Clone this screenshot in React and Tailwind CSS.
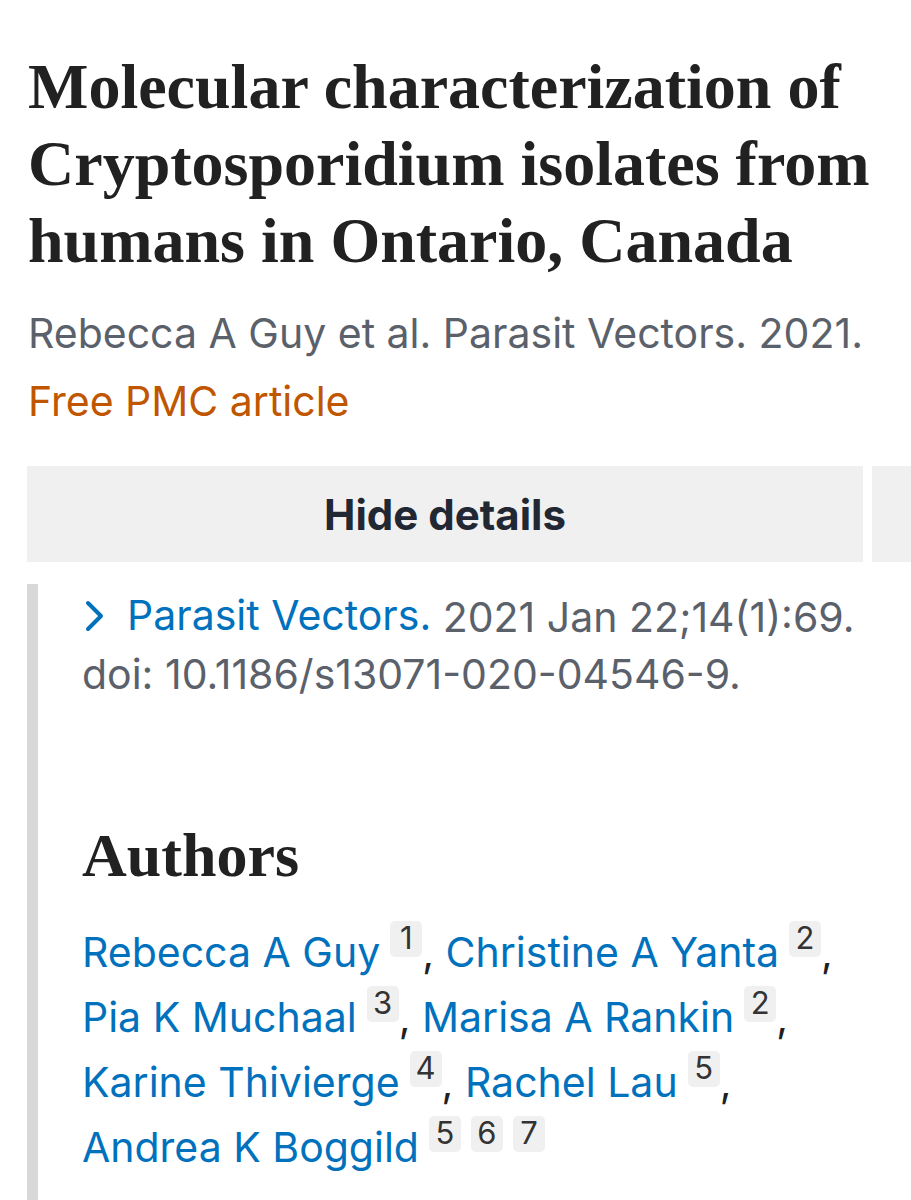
export default function App() {
  const sans = { fontFamily: 'Inter, "Liberation Sans", sans-serif' };
  const serif = { fontFamily: '"Liberation Serif", serif' };
  const Sup = ({ n }) => (
    <span className="inline-flex items-start justify-center align-top ml-[10px] mt-[1px] h-[36px] min-w-[32px] px-[6px] pt-[1px] rounded-[5px] bg-[#f0f0f0] text-[#333] text-[31px] leading-[32px]">
      {n}
    </span>
  );
  const Author = ({ name, sups, comma }) => (
    <span className="whitespace-nowrap">
      <span className="text-[#0071bc]">{name}</span>
      {sups.map((s, i) => (
        <Sup key={i} n={s} />
      ))}
      {comma && <span className="text-[#212121]">,</span>}
    </span>
  );
  return (
    <div className="bg-white w-[911px] h-[1200px] overflow-hidden" style={sans}>
      <div className="pl-[28px] pt-[48px]">
        <h1 className="text-[#212121] font-bold text-[64px] leading-[77px]" style={serif}>
          Molecular characterization of Cryptosporidium isolates from humans in Ontario, Canada
        </h1>
        <p className="mt-[31px] text-[#5b616b] text-[41px] leading-[46px]">
          Rebecca A Guy et al. Parasit Vectors. 2021.
        </p>
        <p className="mt-[22px] text-[#c05600] text-[41px] leading-[46px]">Free PMC article</p>
      </div>
      <div className="flex gap-[9px] pl-[27px] mt-[42px]">
        <div className="w-[836px] h-[96px] bg-[#f0f0f0] flex items-center justify-center text-[#212733] font-bold text-[42px]">
          Hide details
        </div>
        <div className="flex-1 h-[96px] bg-[#f0f0f0]" />
      </div>
      <div className="ml-[27px] mt-[22px] border-l-[11px] border-[#d8d8d8] pl-[44px] pt-[3px] h-[700px]">
        <p className="text-[#5b616b] text-[41px] leading-[57px] whitespace-nowrap">
          <span className="text-[#0071bc] inline-flex items-center">
            <svg width="20" height="32" viewBox="0 0 20 32" className="ml-[3px] mr-[22px]">
              <path d="M3 3 L16 16 L3 29" fill="none" stroke="#0071bc" strokeWidth="4" strokeLinecap="round" strokeLinejoin="round" />
            </svg>
            Parasit Vectors.
          </span>{' '}
          2021 Jan 22;14(1):69.
          <br />
          doi: 10.1186/s13071-020-04546-9.
        </p>
        <h2 className="mt-[120px] text-[#212121] font-bold text-[62px] leading-[64px]" style={serif}>
          Authors
        </h2>
        <div className="mt-[33px] text-[41px] leading-[65px]">
          <Author name="Rebecca A Guy" sups={[1]} comma />{' '}
          <Author name="Christine A Yanta" sups={[2]} comma />{' '}
          <Author name="Pia K Muchaal" sups={[3]} comma />{' '}
          <Author name="Marisa A Rankin" sups={[2]} comma />{' '}
          <Author name="Karine Thivierge" sups={[4]} comma />{' '}
          <Author name="Rachel Lau" sups={[5]} comma />{' '}
          <Author name="Andrea K Boggild" sups={[5, 6, 7]} />
        </div>
      </div>
    </div>
  );
}
